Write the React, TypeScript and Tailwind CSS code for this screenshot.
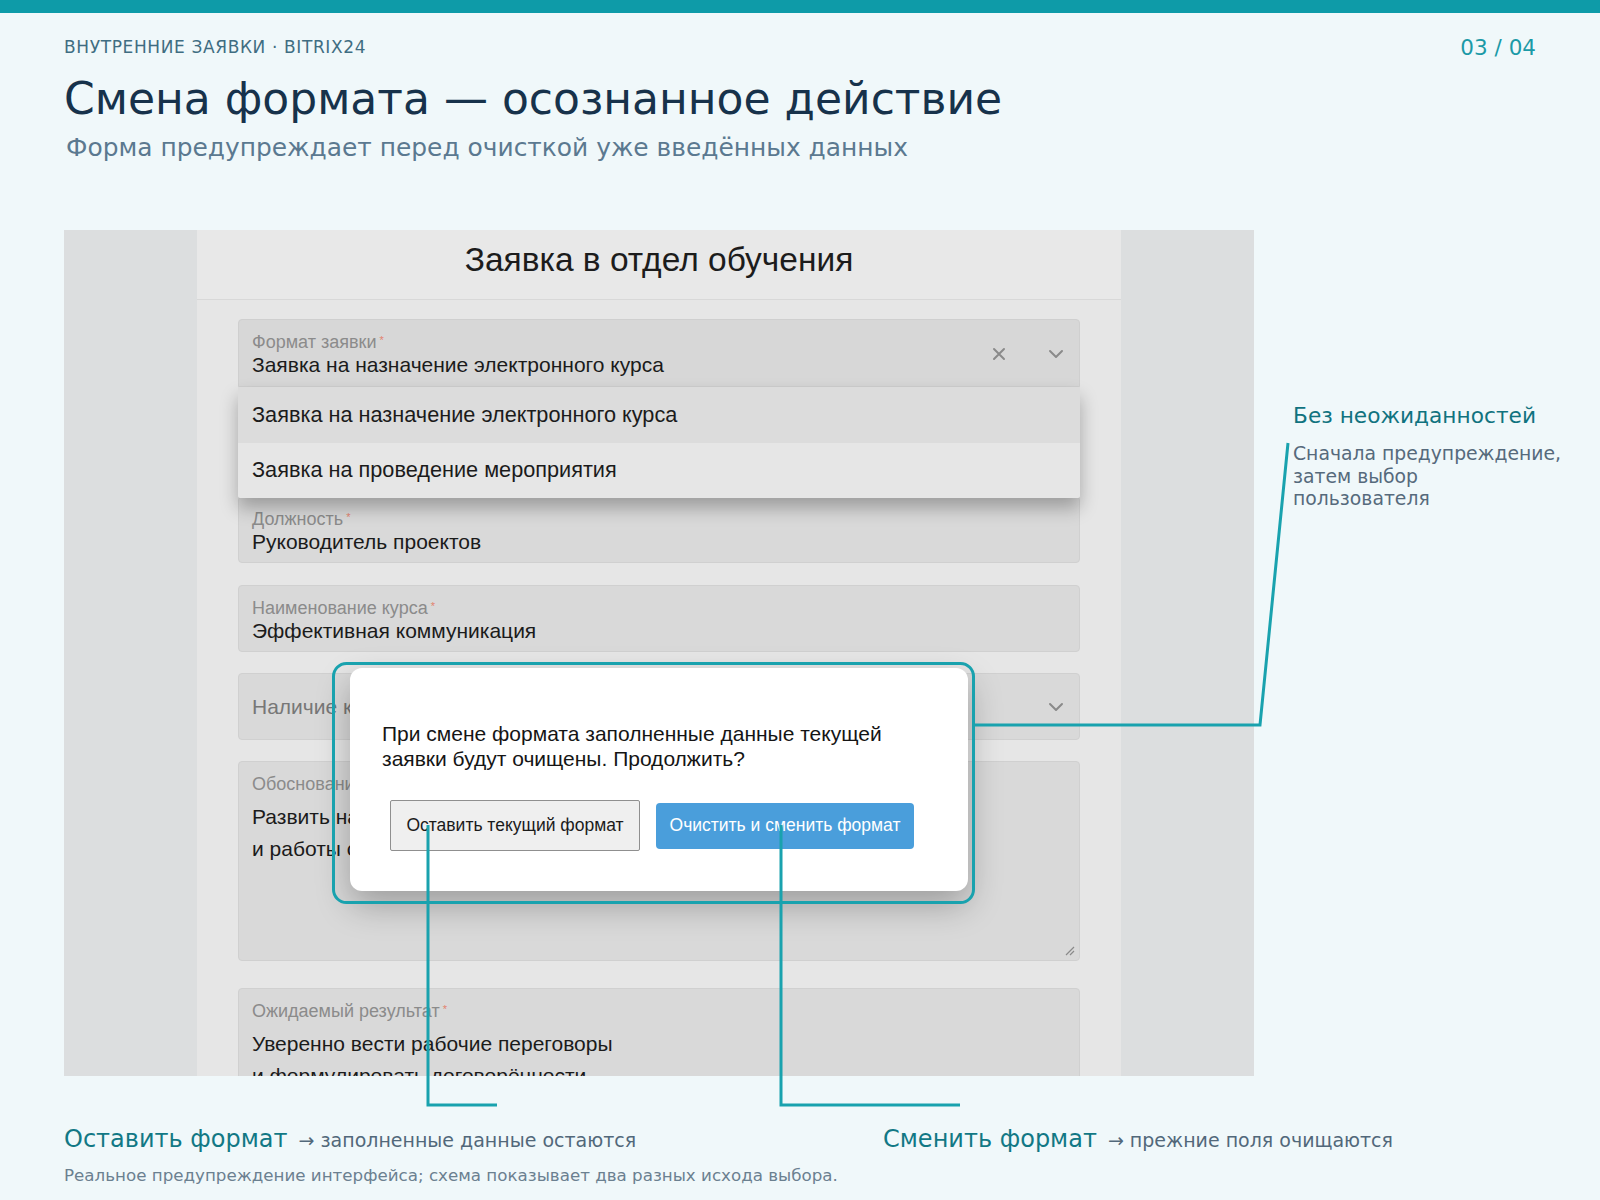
import React from "react";

const Req = () => <span className="text-[#e2836f] text-[11px] align-top relative top-[-2px] ml-[3px]">*</span>;

function Chevron() {
  return (
    <svg width="16" height="10" viewBox="0 0 16 10" className="shrink-0">
      <path d="M2 2 L8 8 L14 2" fill="none" stroke="#8a8a8a" strokeWidth="2" strokeLinecap="round" strokeLinejoin="round" />
    </svg>
  );
}

function Cross() {
  return (
    <svg width="14" height="14" viewBox="0 0 14 14" className="shrink-0">
      <path d="M2 2 L12 12 M12 2 L2 12" fill="none" stroke="#8a8a8a" strokeWidth="2" strokeLinecap="round" />
    </svg>
  );
}

function Field({ label, value, extra = "" }: { label: string; value: string; extra?: string }) {
  return (
    <div className={`h-[67px] rounded-[4px] bg-[#d9d9d9] border border-[#d0d0d0] px-[13px] pt-[13px] ${extra}`}>
      <div className="text-[18px] leading-[18px] text-[#8b8b8b]">
        {label}
        <Req />
      </div>
      <div className="mt-[2px] text-[21px] leading-[24px] text-[#1b1b1b] whitespace-nowrap">{value}</div>
    </div>
  );
}

function AreaField({ label, lines, extra = "" }: { label: string; lines: string[]; extra?: string }) {
  return (
    <div className={`relative h-[200px] rounded-[4px] bg-[#d9d9d9] border border-[#d0d0d0] px-[13px] pt-[13px] ${extra}`}>
      <div className="text-[18px] leading-[18px] text-[#8b8b8b]">
        {label}
        <Req />
      </div>
      <div className="mt-[8px] text-[21px] leading-[32px] text-[#1b1b1b] whitespace-nowrap">
        {lines.map((l) => (
          <div key={l}>{l}</div>
        ))}
      </div>
      <svg width="12" height="12" viewBox="0 0 12 12" className="absolute right-[4px] bottom-[4px]">
        <path d="M11 3 L3 11 M11 7 L7 11" stroke="#8a8a8a" strokeWidth="1.2" />
      </svg>
    </div>
  );
}

function Screenshot() {
  return (
    <div className="relative w-[1190px] h-[846px] shrink-0 overflow-hidden bg-[#dcdedf] flex justify-center font-['Liberation_Sans',Arial,sans-serif]">
      <div className="w-[924px] bg-[#e6e6e6] self-start">
        <div className="h-[70px] border-b border-[#d8d8d8] bg-[#e8e8e8] pt-[11px] text-center text-[33.5px] leading-[38px] text-[#1c1c1c]">
          Заявка в отдел обучения
        </div>
        <div className="px-[41px] pt-[19px] flex flex-col gap-[21px]">
          <div className="relative">
            <div className="h-[68px] rounded-t-[4px] bg-[#d7d7d7] border border-[#cfcfcf] px-[13px] pt-[13px] flex">
              <div className="flex-1">
                <div className="text-[18px] leading-[18px] text-[#8b8b8b]">
                  Формат заявки
                  <Req />
                </div>
                <div className="mt-[2px] text-[21px] leading-[24px] text-[#1b1b1b]">Заявка на назначение электронного курса</div>
              </div>
              <div className="flex items-center gap-[42px] pr-[2px] pb-[12px]">
                <Cross />
                <Chevron />
              </div>
            </div>
            <div className="absolute left-0 right-0 top-full z-10 bg-[#e5e5e5] shadow-[0_10px_18px_rgba(0,0,0,0.28)] rounded-b-[3px] overflow-hidden">
              <div className="h-[56px] bg-[#dcdcdc] px-[14px] flex items-center text-[21.7px] text-[#1b1b1b]">
                Заявка на назначение электронного курса
              </div>
              <div className="h-[55px] bg-[#e6e6e6] px-[14px] flex items-center text-[21.7px] text-[#1b1b1b]">
                Заявка на проведение мероприятия
              </div>
            </div>
          </div>
          <Field label="ФИО сотрудника" value="Иванова Анна Сергеевна" />
          <Field label="Должность" value="Руководитель проектов" extra="mb-[1px]" />
          <Field label="Наименование курса" value="Эффективная коммуникация" />
          <div className="h-[67px] rounded-[4px] bg-[#d9d9d9] border border-[#d0d0d0] px-[13px] flex items-center">
            <div className="flex-1 text-[21px] text-[#777777]">Наличие курса в каталоге</div>
            <div className="pr-[2px]">
              <Chevron />
            </div>
          </div>
          <AreaField
            label="Обоснование необходимости"
            lines={["Развить навыки ведения переговоров", "и работы с возражениями клиентов"]}
            extra="mb-[6px]"
          />
          <AreaField
            label="Ожидаемый результат"
            lines={["Уверенно вести рабочие переговоры", "и формулировать договорённости"]}
          />
        </div>
      </div>

      <div className="absolute left-[286px] top-[438px] w-[618px] h-[223px] z-20 rounded-[12px] bg-white shadow-[0_14px_34px_rgba(0,0,0,0.28)]">
        <div className="pl-[32px] pt-[54px] text-[21px] leading-[24.5px] text-[#151515]">
          При смене формата заполненные данные текущей
          <br />
          заявки будут очищены. Продолжить?
        </div>
        <div className="mt-[29px] pl-[40px] flex items-center gap-[16px]">
          <div className="w-[250px] h-[51px] rounded-[2px] border-[1.5px] border-[#8f8f8f] bg-[#efefef] flex items-center justify-center text-[17.5px] text-[#1b1b1b]">
            Оставить текущий формат
          </div>
          <div className="w-[258px] h-[46px] rounded-[4px] bg-[#4a9edb] flex items-center justify-center text-[17.5px] text-white">
            Очистить и сменить формат
          </div>
        </div>
      </div>
    </div>
  );
}

export default function App() {
  return (
    <div className="relative w-[1600px] h-[1200px] overflow-hidden bg-[#f0f8fa] font-['DejaVu_Sans',sans-serif]">
      <div className="h-[13px] bg-[#0e9ba8]" />
      <div className="px-16">
        <div className="mt-[24px] flex justify-between items-start">
          <div className="text-[17px] leading-[20px] tracking-[0.62px] text-[#3f6d82]">ВНУТРЕННИЕ ЗАЯВКИ · BITRIX24</div>
          <div className="-mt-[1px] text-[21.5px] leading-[24px] text-[#1b9aa7]">03 / 04</div>
        </div>
        <h1 className="mt-[13px] text-[44px] leading-[52px] text-[#17324b] font-normal">Смена формата — осознанное действие</h1>
        <p className="mt-[8px] pl-[2px] text-[24.9px] leading-[30px] text-[#5b7990]">Форма предупреждает перед очисткой уже введённых данных</p>

        <div className="mt-[67px] flex">
          <Screenshot />
          <div className="ml-[39px] pt-[174px] whitespace-nowrap">
            <div className="text-[21.7px] leading-[24px] text-[#10737f]">Без неожиданностей</div>
            <div className="mt-[15px] text-[18.8px] leading-[22.5px] text-[#566a7c]">
              Сначала предупреждение,
              <br />
              затем выбор
              <br />
              пользователя
            </div>
          </div>
        </div>

        <div className="mt-[48px] flex text-[24px] leading-[30px]">
          <div className="w-[819px] whitespace-nowrap">
            <span className="text-[#127885]">Оставить формат</span>
            <span className="ml-[11px] text-[19px] text-[#52687a]">→ заполненные данные остаются</span>
          </div>
          <div className="whitespace-nowrap">
            <span className="text-[#127885]">Сменить формат</span>
            <span className="ml-[11px] text-[19px] text-[#52687a]">→ прежние поля очищаются</span>
          </div>
        </div>
        <div className="mt-[9.5px] text-[16.7px] leading-[20px] text-[#6b8090]">
          Реальное предупреждение интерфейса; схема показывает два разных исхода выбора.
        </div>
      </div>

      <svg className="absolute left-0 top-0 pointer-events-none z-30" width="1600" height="1200" viewBox="0 0 1600 1200">
        <rect x="333.5" y="663.5" width="640" height="239" rx="13" fill="none" stroke="#19a2ae" strokeWidth="3" />
        <polyline points="975,725 1260,725 1288,443" fill="none" stroke="#19a2ae" strokeWidth="3" />
        <polyline points="428,825 428,1105 497,1105" fill="none" stroke="#19a2ae" strokeWidth="3" />
        <polyline points="781,825 781,1105 960,1105" fill="none" stroke="#19a2ae" strokeWidth="3" />
      </svg>
    </div>
  );
}
